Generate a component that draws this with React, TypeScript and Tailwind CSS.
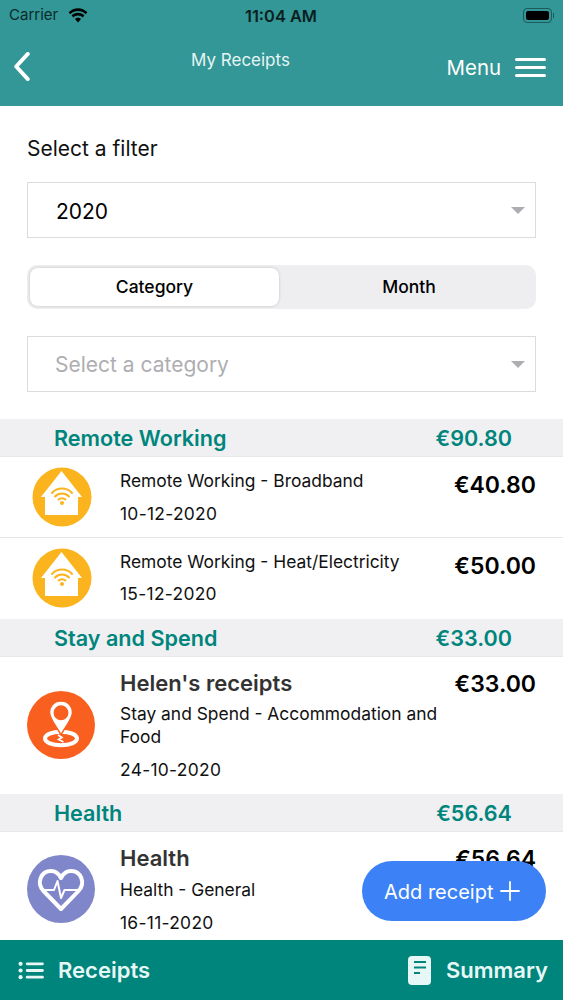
import React from 'react';

const HouseIcon = () => (
  <svg viewBox="0 0 60 60" className="w-[60px] h-[60px] shrink-0">
    <circle cx="30" cy="30" r="29.5" fill="#fbb41e" />
    <path d="M29.5 4 L50 30 H46 V48 H13 V30 H9 Z" fill="#fff" />
    <g fill="none" stroke="#fbb41e" strokeWidth="2" strokeLinecap="round">
      <path d="M20 26 C25 20 35 20 40 26" />
      <path d="M23 29.5 C27 25.5 33 25.5 37 29.5" />
      <path d="M26.5 32.5 C28.5 31 31.5 31 33.5 32.5" />
    </g>
    <circle cx="30" cy="36" r="2" fill="#fbb41e" />
  </svg>
);

const PinIcon = () => (
  <svg viewBox="0 0 68 68" className="w-[68px] h-[68px] shrink-0">
    <circle cx="34" cy="34" r="34" fill="#f9601f" />
    <ellipse cx="34" cy="47.5" rx="16" ry="6.8" fill="none" stroke="#fff" strokeWidth="4" />
    <path fillRule="evenodd" d="M34 10 C26 10 22.5 16 22.5 21.5 C22.5 28 30 36 34 44 C38 36 45.5 28 45.5 21.5 C45.5 16 42 10 34 10 Z M34 15 A6.7 6.7 0 1 1 34 28.4 A6.7 6.7 0 1 1 34 15 Z" fill="#fff" stroke="#f9601f" strokeWidth="1.5" />
    <path d="M31 44 L35 46.5 L31.5 48.5 L36.5 51" fill="none" stroke="#fff" strokeWidth="1.6" />
  </svg>
);

const HeartIcon = () => (
  <svg viewBox="0 0 68 68" className="w-[68px] h-[68px] shrink-0">
    <circle cx="34" cy="34" r="34" fill="#7f86c9" />
    <path d="M34 54 L16.5 36 C9 28 14 16 24 16 C28 16 32 19 34 23 C36 19 40 16 44 16 C54 16 59 28 51.5 36 Z" fill="none" stroke="#fff" strokeWidth="4" strokeLinejoin="round" />
    <path d="M15 35 H27 L30.5 26 L34 43 L37.5 35 H53" fill="none" stroke="#fff" strokeWidth="2" strokeLinejoin="round" />
  </svg>
);

const Caret = () => (
  <div className="w-0 h-0 border-l-[7px] border-r-[7px] border-t-[7px] border-l-transparent border-r-transparent border-t-[#aeaeb2]" />
);

const SectionHeader = ({ title, total }: { title: string; total: string }) => (
  <div className="h-[38px] shrink-0 bg-[#f0f0f3] border-b border-[#e8e8ea] flex items-center justify-between pt-[2px] pl-[54px] pr-[51px] text-[21.6px] font-semibold text-[#00857c]">
    <span>{title}</span>
    <span>{total}</span>
  </div>
);

export default function App() {
  return (
    <div className="relative h-[1000px] w-[563px] overflow-hidden flex flex-col bg-white text-black" style={{ fontFamily: 'Inter, "Noto Sans", sans-serif' }}>
      {/* header */}
      <header className="h-[106px] shrink-0 bg-[#329796] relative text-white">
        <div className="flex items-center justify-between h-[30px] pl-[9px] pr-[9px] text-black">
          <div className="flex items-center gap-[10px] text-[15px] text-[#0b2a2a]">
            <span>Carrier</span>
            <svg viewBox="0 0 20 15" className="w-[20px] h-[15px]" fill="#000">
              <path d="M10 3 C13 3 15.6 4.2 17.6 6.2 L19.4 4.3 C16.9 1.8 13.6 0.2 10 0.2 C6.4 0.2 3.1 1.8 0.6 4.3 L2.4 6.2 C4.4 4.2 7 3 10 3 Z" />
              <path d="M10 7.5 C11.8 7.5 13.4 8.2 14.6 9.4 L16.4 7.5 C14.7 5.8 12.5 4.8 10 4.8 C7.5 4.8 5.3 5.8 3.6 7.5 L5.4 9.4 C6.6 8.2 8.2 7.5 10 7.5 Z" />
              <path d="M10 9.7 C8.9 9.7 7.8 10.2 7 11 L10 14.4 L13 11 C12.2 10.2 11.1 9.7 10 9.7 Z" />
            </svg>
          </div>
          <span className="absolute left-[245px] top-[4px] text-[16.4px] font-semibold text-[#0b1f1f] whitespace-nowrap">11:04 AM</span>
          <div className="flex items-center">
            <div className="w-[29px] h-[15px] rounded-[4px] border border-[#1d5a5a] p-[2px]">
              <div className="w-full h-full rounded-[2px] bg-black" />
            </div>
            <div className="w-[1px] h-[5px] bg-[#1d5a5a] ml-[1px]" />
          </div>
        </div>
        <svg viewBox="0 0 18 30" className="absolute left-[13px] top-[52px] w-[18px] h-[29px]" fill="none" stroke="#fff" strokeWidth="4" strokeLinecap="round" strokeLinejoin="round">
          <path d="M15 2 L3 15 L15 28" />
        </svg>
        <span className="absolute left-[191px] top-[48px] text-[17px] text-[#e6f5f4]">My Receipts</span>
        <div className="absolute right-[17px] top-[53px] flex items-center gap-[14px]">
          <span className="text-[20.4px] leading-[28px] pt-[1px]">Menu</span>
          <div className="flex flex-col gap-[5px]">
            <div className="w-[31px] h-[3px] rounded-full bg-white" />
            <div className="w-[31px] h-[3px] rounded-full bg-white" />
            <div className="w-[31px] h-[3px] rounded-full bg-white" />
          </div>
        </div>
      </header>

      {/* filters */}
      <section className="h-[313px] shrink-0 px-[27px] pt-[29px]">
        <div className="text-[21px] leading-[28px] text-[#111]">Select a filter</div>
        <div className="mt-[19px] h-[56px] border border-[#dcdcde] flex items-center justify-between pl-[28px] pr-[10px] text-[21px]">
          <span className="pt-[4px]">2020</span>
          <Caret />
        </div>
        <div className="mt-[27px] h-[44px] rounded-[10px] bg-[#eeeef0] flex p-[3px] text-[17.5px] font-medium">
          <div className="w-[249px] rounded-[8px] bg-white flex items-center justify-center shadow-[0_0_3px_rgba(0,0,0,0.2)]">Category</div>
          <div className="flex-1 flex items-center justify-center pl-[6px]">Month</div>
        </div>
        <div className="mt-[27px] h-[56px] border border-[#dcdcde] flex items-center justify-between pl-[27px] pr-[10px] text-[21px] text-[#aeaeb2]">
          <span className="pt-[2px]">Select a category</span>
          <Caret />
        </div>
      </section>

      {/* receipts */}
      <div className="flex-1 overflow-hidden flex flex-col">
        <SectionHeader title="Remote Working" total="€90.80" />
        <div className="h-[81px] shrink-0 border-b border-[#e6e6e8] flex pl-[32px] pr-[27px] pt-[10px]">
          <HouseIcon />
          <div className="ml-[28px] flex-1 text-[17.4px] text-[#111]">
            <div className="leading-[28px]">Remote Working - Broadband</div>
            <div className="leading-[28px] mt-[5px] tracking-[0.3px]">10-12-2020</div>
          </div>
          <span className="text-[23px] font-semibold leading-[36px]">€40.80</span>
        </div>
        <div className="h-[81px] shrink-0 flex pl-[32px] pr-[27px] pt-[10px]">
          <HouseIcon />
          <div className="ml-[28px] flex-1 text-[17.4px] text-[#111]">
            <div className="leading-[28px]">Remote Working - Heat/Electricity</div>
            <div className="leading-[28px] mt-[4px] tracking-[0.3px]">15-12-2020</div>
          </div>
          <span className="text-[23px] font-semibold leading-[36px]">€50.00</span>
        </div>
        <SectionHeader title="Stay and Spend" total="€33.00" />
        <div className="h-[137px] shrink-0 flex items-start pl-[27px] pr-[27px]">
          <div className="mt-[34px]"><PinIcon /></div>
          <div className="ml-[25px] w-[330px] text-[17.4px] text-[#111] pt-[9px]">
            <div className="text-[22px] font-semibold leading-[34px] text-[#333]">Helen's receipts</div>
            <div className="leading-[23px] mt-[2px]">Stay and Spend - Accommodation and Food</div>
            <div className="leading-[28px] mt-[8px] tracking-[0.3px]">24-10-2020</div>
          </div>
          <span className="ml-auto mt-[9px] text-[23px] font-semibold leading-[36px]">€33.00</span>
        </div>
        <SectionHeader title="Health" total="€56.64" />
        <div className="flex-1 flex items-start pl-[27px] pr-[27px]">
          <div className="mt-[23px]"><HeartIcon /></div>
          <div className="ml-[25px] flex-1 text-[17.4px] text-[#111] pt-[9px]">
            <div className="text-[22px] font-semibold leading-[34px] text-[#333]">Health</div>
            <div className="leading-[28px] mt-[1px]">Health - General</div>
            <div className="leading-[28px] mt-[5px] tracking-[0.3px]">16-11-2020</div>
          </div>
          <span className="mt-[9px] text-[23px] font-semibold leading-[36px]">€56.64</span>
        </div>
      </div>

      {/* add receipt */}
      <div className="absolute left-[362px] top-[861px] w-[184px] h-[60px] rounded-full bg-[#3c82f6] flex items-center gap-[6px] pl-[22px] text-white text-[20px]">
        <span className="pt-[1px]">Add receipt</span>
        <svg viewBox="0 0 20 20" className="w-[20px] h-[20px]" stroke="#fff" strokeWidth="1.8" strokeLinecap="round">
          <path d="M10 1 V19 M1 10 H19" />
        </svg>
      </div>

      {/* bottom tabs */}
      <footer className="h-[60px] shrink-0 bg-[#00857c] flex items-center justify-between pl-[18px] pr-[15px] text-[22px] font-semibold text-[#e6f7f5]">
        <div className="flex items-center gap-[13px]">
          <svg viewBox="0 0 28 20" className="w-[27px] h-[19px]" fill="#e6f7f5">
            <circle cx="2.5" cy="3" r="2.2" />
            <circle cx="2.5" cy="10" r="2.2" />
            <circle cx="2.5" cy="17" r="2.2" />
            <rect x="8" y="1.5" width="19" height="3" rx="1.5" />
            <rect x="8" y="8.5" width="19" height="3" rx="1.5" />
            <rect x="8" y="15.5" width="19" height="3" rx="1.5" />
          </svg>
          <span>Receipts</span>
        </div>
        <div className="flex items-center gap-[15px]">
          <svg viewBox="0 0 23 29" className="w-[23px] h-[29px]">
            <rect width="23" height="29" rx="4" fill="#e6f7f5" />
            <rect x="6" y="5" width="12" height="2" fill="#00857c" />
            <rect x="6" y="10.5" width="12" height="2" fill="#00857c" />
            <rect x="6" y="16" width="6" height="2" fill="#00857c" />
          </svg>
          <span>Summary</span>
        </div>
      </footer>
    </div>
  );
}
